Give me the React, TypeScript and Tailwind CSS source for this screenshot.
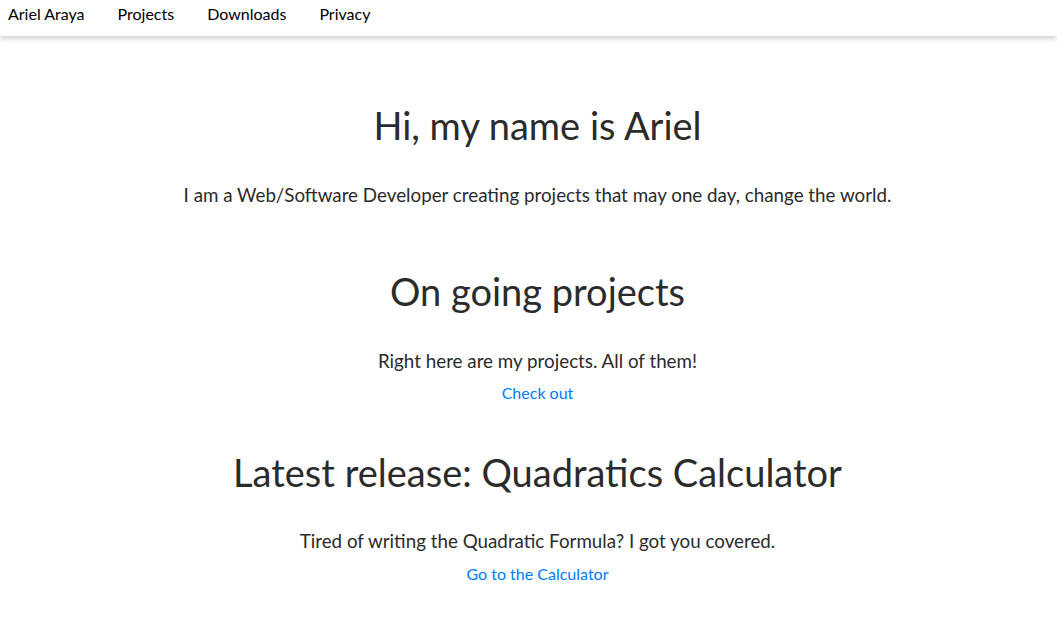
import React from 'react';

const navItems = ['Ariel Araya', 'Projects', 'Downloads', 'Privacy'];

const App: React.FC = () => {
  return (
    <div className="min-h-screen bg-white text-[#2b2b2b]" style={{ fontFamily: 'Lato, "Open Sans", sans-serif' }}>
      {/* Top nav */}
      <nav className="h-9 bg-white shadow-[0_2px_6px_rgba(0,0,0,0.22)]">
        <ul className="flex gap-[33px] pl-2 pt-[2px] text-[16px] leading-6 text-black">
          {navItems.map((item) => (
            <li key={item}>
              <a href="#">{item}</a>
            </li>
          ))}
        </ul>
      </nav>

      <main className="flex flex-col items-center pl-[18px] text-center">
        <section className="mt-[66px] flex flex-col items-center">
          <h1 className="text-[38px] leading-[46px]">Hi, my name is Ariel</h1>
          <p className="mt-[33px] text-[18.8px] leading-[28px]">
            I am a Web/Software Developer creating projects that may one day, change the world.
          </p>
        </section>

        <section className="mt-[59px] flex flex-col items-center">
          <h1 className="text-[38px] leading-[46px]">On going projects</h1>
          <p className="mt-[33px] text-[18.8px] leading-[28px]">Right here are my projects. All of them!</p>
          <a href="#" className="mt-[6px] text-[16px] leading-[24px] text-[#007bff]">Check out</a>
        </section>

        <section className="mt-[44px] flex flex-col items-center">
          <h1 className="text-[38px] leading-[46px]">Latest release: Quadratics Calculator</h1>
          <p className="mt-[32px] text-[18.8px] leading-[28px]">Tired of writing the Quadratic Formula? I got you covered.</p>
          <a href="#" className="mt-[7px] text-[16px] leading-[24px] text-[#007bff]">Go to the Calculator</a>
        </section>
      </main>
    </div>
  );
};

export default App;
